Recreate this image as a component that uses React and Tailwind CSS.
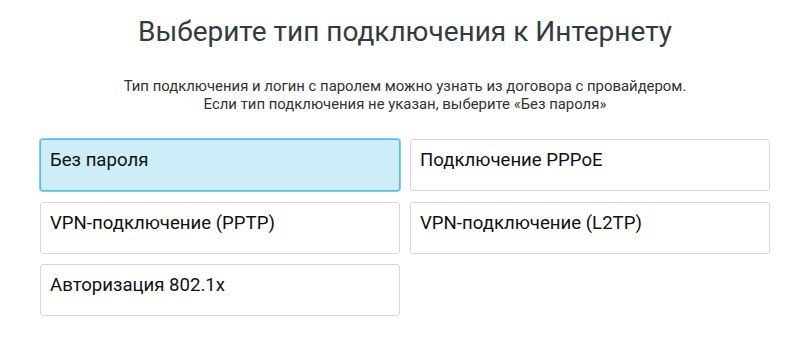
const options = [
  { label: 'Без пароля', selected: true },
  { label: 'Подключение PPPoE' },
  { label: 'VPN-подключение (PPTP)' },
  { label: 'VPN-подключение (L2TP)' },
  { label: 'Авторизация 802.1x' },
];

const App = () => {
  return (
    <div className="w-[800px] h-[349px] bg-white font-['Roboto','Liberation_Sans',sans-serif] overflow-hidden">
      <div className="ml-[40px] w-[730px] pt-[14px]">
        <h1 className="text-center text-[28px] leading-[35px] font-normal text-[#333a40]">
          Выберите тип подключения к Интернету
        </h1>
        <div className="mt-[29px] text-center text-[14.9px] leading-[17.5px] text-[#333]">
          <p>Тип подключения и логин с паролем можно узнать из договора с провайдером.</p>
          <p>Если тип подключения не указан, выберите «Без пароля»</p>
        </div>
        <div className="mt-[26px] grid grid-cols-[360px_360px] gap-x-[10px] gap-y-[10.5px]">
          {options.map((item, idx) => (
            <div
              key={idx}
              className={
                item.selected
                  ? 'h-[52px] rounded-[3px] border border-[#4fbdee] bg-[#cdedf9] shadow-[0_0_0_1px_#7fd0f3] px-[9px] pt-[9px] text-[18.6px] leading-[22px] text-[#111]'
                  : 'h-[52px] rounded-[3px] border border-[#d6d6d6] bg-white px-[9px] pt-[9px] text-[18.6px] leading-[22px] text-[#111]'
              }
            >
              {item.label}
            </div>
          ))}
        </div>
      </div>
    </div>
  );
};

export default App;
